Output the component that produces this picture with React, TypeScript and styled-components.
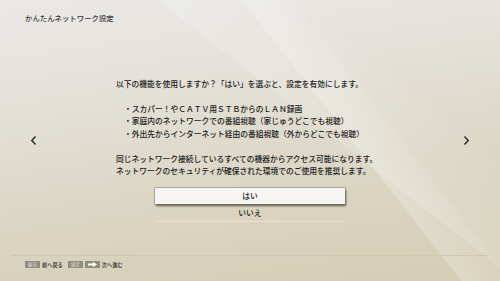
import React from "react";
import styled, { createGlobalStyle } from "styled-components";

const GlobalStyle = createGlobalStyle`
  html, body {
    margin: 0;
    padding: 0;
    width: 500px;
    height: 281px;
    overflow: hidden;
  }
  body {
    font-family: "Noto Sans CJK JP", "Noto Sans", sans-serif;
  }
`;

const bullets = [
  "スカパー！やＣＡＴＶ用ＳＴＢからのＬＡＮ録画",
  "家庭内のネットワークでの番組視聴（家じゅうどこでも視聴）",
  "外出先からインターネット経由の番組視聴（外からどこでも視聴）",
];

const Chevron = ({ dir }: { dir: "left" | "right" }) => (
  <ChevronBox>
    <svg width="7" height="11" viewBox="0 0 7 11">
      <polyline
        points={dir === "left" ? "5.5,1.5 1.8,5.5 5.5,9.5" : "1.5,1.5 5.2,5.5 1.5,9.5"}
        fill="none"
        stroke="#2b2b2b"
        strokeWidth="1.5"
      />
    </svg>
  </ChevronBox>
);

const App = () => {
  return (
    <>
      <GlobalStyle />
      <Screen>
        <Header>かんたんネットワーク設定</Header>
        <Main>
          <Chevron dir="left" />
          <Center>
            <Dialog>
              <Line>以下の機能を使用しますか？「はい」を選ぶと、設定を有効にします。</Line>
              <Blank />
              {bullets.map((b) => (
                <Line key={b} indent>
                  ・{b}
                </Line>
              ))}
              <Blank />
              <Line>同じネットワーク接続しているすべての機器からアクセス可能になります。</Line>
              <Line>ネットワークのセキュリティが確保された環境でのご使用を推奨します。</Line>
              <Choices>
                <Choice selected>はい</Choice>
                <Choice>いいえ</Choice>
              </Choices>
            </Dialog>
          </Center>
          <Chevron dir="right" />
        </Main>
        <Footer>
          <Key>戻る</Key>
          <Hint>前へ戻る</Hint>
          <Key>決定</Key>
          <Key>
            <svg width="9" height="5" viewBox="0 0 9 5">
              <path d="M0 1.5h5V0l4 2.5-4 2.5V3.5H0z" fill="#fff" />
            </svg>
          </Key>
          <Hint>次へ進む</Hint>
        </Footer>
      </Screen>
    </>
  );
};

const Screen = styled.div`
  width: 500px;
  height: 281px;
  display: flex;
  flex-direction: column;
  overflow: hidden;
  background:
    linear-gradient(52deg, transparent 64%, rgba(255, 255, 255, 0.22) 64.3%, rgba(255, 255, 255, 0.08) 71%, transparent 71.3%),
    linear-gradient(38deg, transparent 60%, rgba(255, 255, 255, 0.16) 60.3%, rgba(255, 255, 255, 0.04) 76%, transparent 76.3%),
    linear-gradient(172deg, #eae9e6 0%, #e4e1d9 30%, #dbd5c3 65%, #d4cdb4 100%);
`;

const Header = styled.div`
  height: 25px;
  box-sizing: border-box;
  padding: 13px 0 0 25px;
  font-size: 7.4px;
  font-weight: 500;
  line-height: 10px;
  color: #3a3a3a;
`;

const Main = styled.div`
  height: 230px;
  display: flex;
  align-items: center;
  padding: 0 30px;
`;

const ChevronBox = styled.div`
  width: 7px;
  height: 11px;
  display: flex;
  svg {
    display: block;
  }
`;

const Center = styled.div`
  flex: 1;
  align-self: stretch;
  display: flex;
  justify-content: center;
  padding-top: 52.75px;
`;

const Dialog = styled.div`
  width: 268px;
  display: flex;
  flex-direction: column;
  font-size: 7.75px;
  font-weight: 500;
  line-height: 12.5px;
  color: #1c1c1c;
  white-space: nowrap;
`;

const Line = styled.div<{ indent?: boolean }>`
  padding-left: ${({ indent }) => (indent ? "8px" : "0")};
`;

const Blank = styled.div`
  height: 12.5px;
`;

const Choices = styled.div`
  margin-top: 10.25px;
  width: 190px;
  align-self: center;
  display: flex;
  flex-direction: column;
`;

const Choice = styled.div<{ selected?: boolean }>`
  height: 16px;
  display: flex;
  align-items: center;
  justify-content: center;
  font-size: 7.75px;
  color: #1c1c1c;
  background: ${({ selected }) => (selected ? "#f6f5f1" : "transparent")};
  box-shadow: ${({ selected }) =>
    selected ? "0 0 0 0.5px #7a766c, 1px 1.5px 2px rgba(40, 36, 26, 0.7)" : "none"};
  border-bottom: ${({ selected }) => (selected ? "none" : "1.5px solid #e6e1d1")};
  margin-top: ${({ selected }) => (selected ? "0" : "1px")};
`;

const Footer = styled.div`
  margin: 0 12px;
  border-top: 1px solid #cfc8b1;
  padding: 5px 0 0 13px;
  display: flex;
  align-items: center;
  gap: 2px;
`;

const Key = styled.div`
  width: 15px;
  height: 7px;
  background: #918c80;
  color: #f0eee8;
  font-size: 4.5px;
  line-height: 7px;
  text-align: center;
  display: flex;
  align-items: center;
  justify-content: center;
`;

const Hint = styled.div`
  font-size: 5.2px;
  font-weight: 500;
  line-height: 7px;
  color: #2b2b2b;
  margin-right: 3px;
`;

export default App;
